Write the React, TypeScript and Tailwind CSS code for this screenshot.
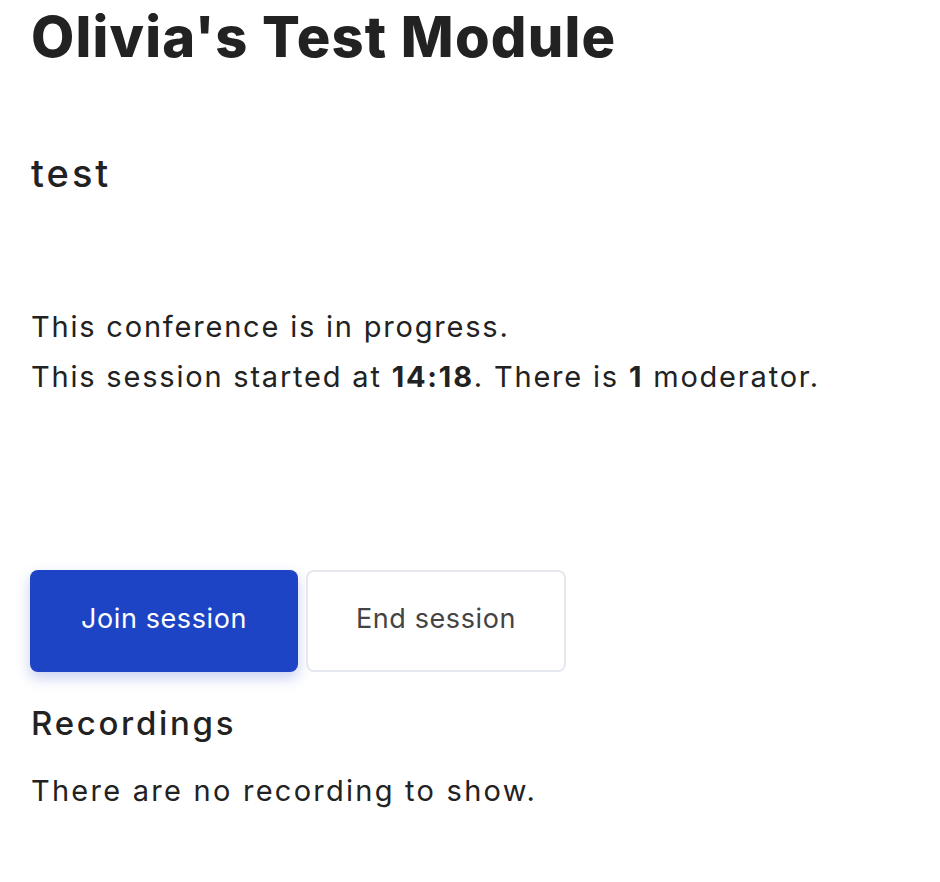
export default function App() {
  return (
    <div className="min-h-screen bg-white px-[31px] text-[#222222] font-['Inter',sans-serif]">
      <h1 className="text-[56px] font-extrabold leading-[74px] tracking-[1.2px]">Olivia's Test Module</h1>

      <h2 className="mt-[74px] text-[38px] font-medium leading-[50px] tracking-[3px]">test</h2>

      <div className="mt-[104px] text-[29px] leading-[50px] tracking-[1.8px]">
        <p>This conference is in progress.</p>
        <p>
          This session started at <b className="font-bold">14:18</b>. There is <b className="font-bold">1</b> moderator.
        </p>
      </div>

      <div className="mt-[168px] flex gap-2 -ml-px">
        <button className="h-[102px] w-[268px] rounded-lg bg-[#1e44c6] pb-1 text-[27px] tracking-[0.6px] text-white shadow-[0_6px_14px_rgba(30,68,198,0.25)]">
          Join session
        </button>
        <button className="h-[102px] w-[260px] rounded-lg border-2 border-[#e6e8ef] bg-white pb-1 text-[27px] tracking-[0.6px] text-[#444444]">
          End session
        </button>
      </div>

      <h3 className="mt-[31px] text-[33px] font-medium leading-[40px] tracking-[2.7px]">Recordings</h3>

      <p className="mt-[28px] text-[29px] leading-[40px] tracking-[2.25px]">There are no recording to show.</p>
    </div>
  );
}
